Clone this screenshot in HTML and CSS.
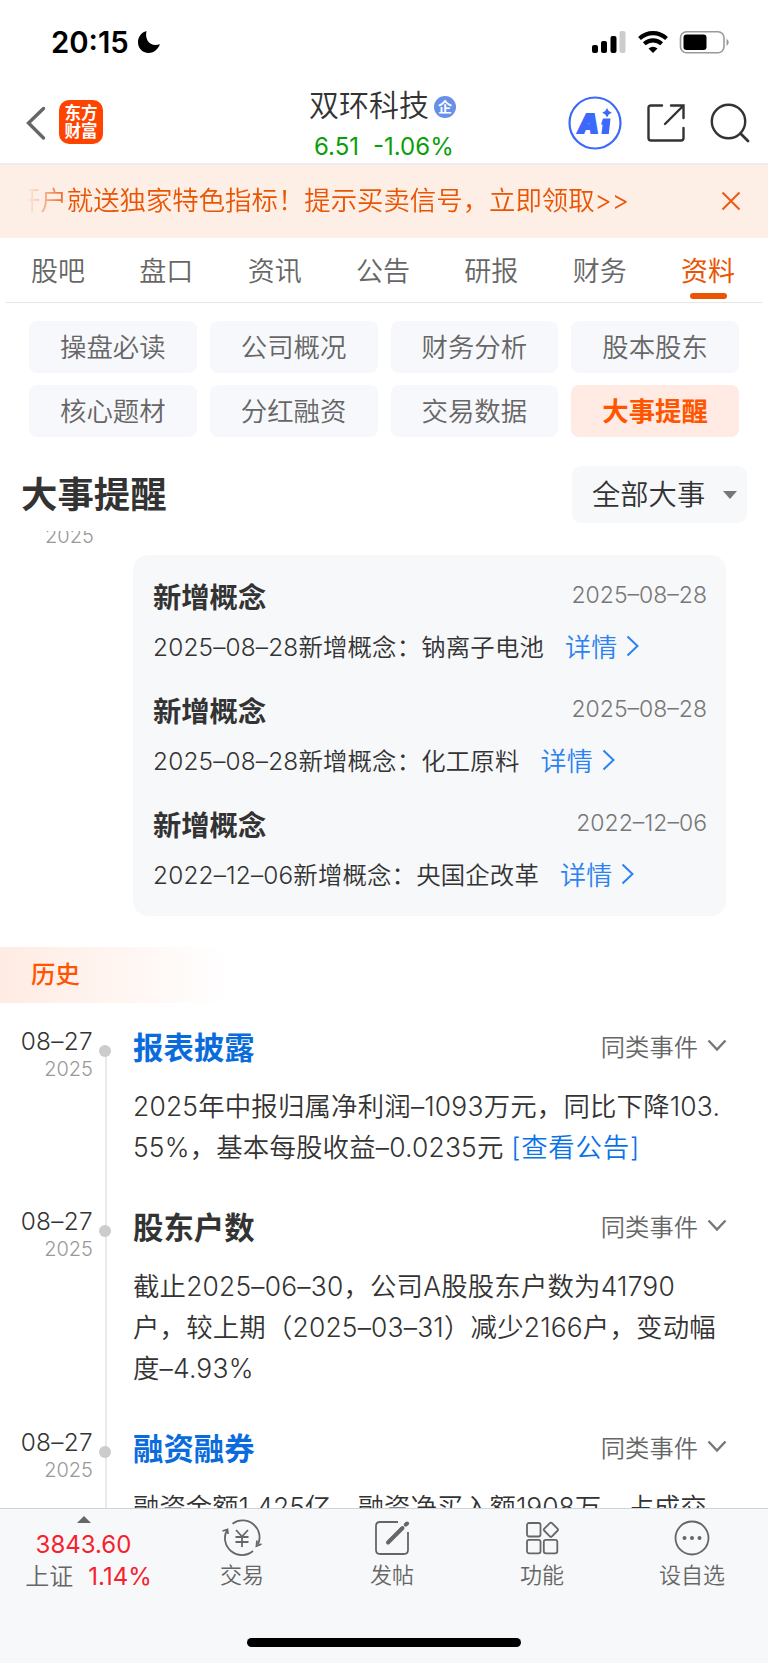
FILE: index.html
```html
<!DOCTYPE html>
<html lang="zh-CN">
<head>
    <meta charset="UTF-8">
    <title>双环科技 - 大事提醒</title>
    <link rel="stylesheet" href="styles.css">
</head>
<body>
    <!-- Status bar -->
    <div class="status-bar">
        <span class="time">20:15</span>
        <svg class="moon" width="24" height="24" viewBox="0 0 24 24"><path d="M9.5 1C7.6 9.5 12.500 17.300 23 14.300C20.500 20 16.500 23 11.500 23C5.500 23 1 18.300 1 12.300C1 7 4.300 2.300 9.500 1z"/></svg>
        <svg class="status-icons" width="140" height="24" viewBox="0 0 140 24">
            <rect x="1" y="14" width="6" height="8" rx="2"/>
            <rect x="10" y="10" width="6" height="12" rx="2"/>
            <rect x="19.500" y="5" width="6" height="17" rx="2"/>
            <rect x="28.500" y="0" width="6" height="22" rx="2" fill="#ccc"/>
            <g fill="none" stroke="#000" stroke-width="4.200">
                <path d="M48.500 7.500C56.500 0.300 67.500 0.300 75.500 7.500"/>
                <path d="M53.300 12.800C58.500 8.200 65.500 8.200 70.700 12.800"/>
            </g>
            <path d="M57.500 17.600Q62 14 66.500 17.600L62 22z"/>
            <rect x="89.500" y="0.800" width="43.500" height="21" rx="6" fill="none" stroke="#999" stroke-width="1.600"/>
            <rect x="92.500" y="3.500" width="23" height="15.500" rx="3"/>
            <path d="M135.500 7.500Q140 11.300 135.500 15z" fill="#999"/>
        </svg>
    </div>

    <!-- Header -->
    <div class="header">
        <svg class="back" width="22" height="36" viewBox="0 0 22 36"><path d="M18.500 3.500L3.500 18L18.500 33" fill="none" stroke="#666" stroke-width="3.400" stroke-linecap="round"/></svg>
        <div class="logo"><span>东方</span><span>财富</span></div>
        <div class="stock">
            <div class="stock-name">双环科技<span class="badge">企</span></div>
            <div class="stock-price"><span>6.51</span><span>-1.06%</span></div>
        </div>
        <div class="header-icons">
            <svg width="54" height="54" viewBox="0 0 54 54">
                <circle cx="27" cy="27" r="25.500" fill="none" stroke="#3c69fb" stroke-width="2.200"/>
                <text x="10" y="36.500" class="ai-text">A</text>
                <path d="M35 22.500h7.500l-1.700 15.500h-7.300l1.100-9.500h-1.600z" fill="#3c69fb"/>
                <path d="M39 12l1.700 3.100 3.100 1.700-3.100 1.700-1.700 3.100-1.700-3.100-3.100-1.700 3.100-1.700z" fill="#3c69fb"/>
            </svg>
            <svg class="share" width="40" height="40" viewBox="0 0 40 40"><path d="M16 2.500H5Q2.500 2.500 2.500 5V35Q2.500 37.500 5 37.500H35Q37.500 37.500 37.500 35V25M25 2.500H37.500V15M37 3L19 21" fill="none" stroke="#333" stroke-width="2.400" stroke-linecap="round"/></svg>
            <svg class="search" width="40" height="40" viewBox="0 0 40 40"><circle cx="18.500" cy="18.500" r="16.700" fill="none" stroke="#333" stroke-width="2.400"/><path d="M30.500 30.500L38 38" stroke="#333" stroke-width="2.800" stroke-linecap="round"/></svg>
        </div>
    </div>

    <!-- Banner -->
    <div class="banner">
        <div class="banner-text">开户就送独家特色指标！提示买卖信号，立即领取&gt;&gt;</div>
        <svg width="20" height="20" viewBox="0 0 20 20"><path d="M1.500 1.500L18.500 18.500M18.500 1.500L1.500 18.500" stroke="#ee5a10" stroke-width="2"/></svg>
    </div>

    <!-- Tabs -->
    <div class="tabs">
        <span class="tab">股吧</span>
        <span class="tab">盘口</span>
        <span class="tab">资讯</span>
        <span class="tab">公告</span>
        <span class="tab">研报</span>
        <span class="tab">财务</span>
        <span class="tab active">资料</span>
    </div>

    <div class="chips">
        <span class="chip">操盘必读</span>
        <span class="chip">公司概况</span>
        <span class="chip">财务分析</span>
        <span class="chip">股本股东</span>
        <span class="chip">核心题材</span>
        <span class="chip">分红融资</span>
        <span class="chip">交易数据</span>
        <span class="chip active">大事提醒</span>
    </div>

    <div class="section-head">
        <h1>大事提醒</h1>
        <div class="dropdown"><span>全部大事</span><svg width="14" height="8" viewBox="0 0 14 8"><path d="M0 0H14L7 8z" fill="#777"/></svg></div>
    </div>

    <!-- Scrolling content -->
    <div class="content">
        <div class="prev-year"><span>2025</span></div>

        <div class="card">
            <div class="concept">
                <div class="concept-head"><h2>新增概念</h2><span class="concept-date">2025–08–28</span></div>
                <div class="concept-desc">2025–08–28新增概念：钠离子电池<a class="detail">详情<svg width="13" height="22" viewBox="0 0 13 22"><path d="M1.500 1.500L11.500 11L1.500 20.500"/></svg></a></div>
            </div>
            <div class="concept">
                <div class="concept-head"><h2>新增概念</h2><span class="concept-date">2025–08–28</span></div>
                <div class="concept-desc">2025–08–28新增概念：化工原料<a class="detail">详情<svg width="13" height="22" viewBox="0 0 13 22"><path d="M1.500 1.500L11.500 11L1.500 20.500"/></svg></a></div>
            </div>
            <div class="concept">
                <div class="concept-head"><h2>新增概念</h2><span class="concept-date">2022–12–06</span></div>
                <div class="concept-desc">2022–12–06新增概念：央国企改革<a class="detail">详情<svg width="13" height="22" viewBox="0 0 13 22"><path d="M1.500 1.500L11.500 11L1.500 20.500"/></svg></a></div>
            </div>
        </div>

        <div class="history">历史</div>

        <div class="timeline">
            <div class="event">
                <div class="event-date"><span class="day">08–27</span><span class="year">2025</span></div>
                <div class="axis first"><i class="dot"></i></div>
                <div class="event-body">
                    <div class="event-head">
                        <h2 class="link">报表披露</h2>
                        <span class="similar">同类事件<svg width="20" height="13" viewBox="0 0 20 13"><path d="M1.500 1.500L10 10.500L18.500 1.500"/></svg></span>
                    </div>
                    <p>2025年中报归属净利润–1093万元，同比下降103.<br>55%，基本每股收益–0.0235元 <a>[查看公告]</a></p>
                </div>
            </div>
            <div class="event">
                <div class="event-date"><span class="day">08–27</span><span class="year">2025</span></div>
                <div class="axis"><i class="dot"></i></div>
                <div class="event-body">
                    <div class="event-head">
                        <h2>股东户数</h2>
                        <span class="similar">同类事件<svg width="20" height="13" viewBox="0 0 20 13"><path d="M1.500 1.500L10 10.500L18.500 1.500"/></svg></span>
                    </div>
                    <p>截止2025–06–30，公司A股股东户数为41790<br>户，较上期（2025–03–31）减少2166户，变动幅<br>度–4.93%</p>
                </div>
            </div>
            <div class="event">
                <div class="event-date"><span class="day">08–27</span><span class="year">2025</span></div>
                <div class="axis"><i class="dot"></i></div>
                <div class="event-body">
                    <div class="event-head">
                        <h2 class="link">融资融券</h2>
                        <span class="similar">同类事件<svg width="20" height="13" viewBox="0 0 20 13"><path d="M1.500 1.500L10 10.500L18.500 1.500"/></svg></span>
                    </div>
                    <p>融资金额1.425亿，融资净买入额1908万，占成交</p>
                </div>
            </div>
        </div>
    </div>

    <!-- Bottom bar -->
    <div class="footer">
        <div class="footer-row">
            <div class="index">
                <svg width="14" height="7" viewBox="0 0 14 7"><path d="M0 7L7 0L14 7z" fill="#666"/></svg>
                <div class="index-value">3843.60</div>
                <div class="index-name">上证<span>1.14%</span></div>
            </div>
            <div class="action">
                <svg width="42" height="38" viewBox="0 0 42 38">
                    <path d="M11.500 4.700A17 17 0 0 1 37 25.500M32 32A17 17 0 0 1 6 11"/>
                    <path d="M1.500 12L6.500 10.500L7 15M40.500 25L35.500 27L36 21.500"/>
                    <path d="M15 11L21 17.500L27 11M21 17.500V28M14.500 18H27.500M14.500 23H27.500"/>
                </svg>
                <span>交易</span>
            </div>
            <div class="action">
                <svg width="38" height="38" viewBox="0 0 38 38">
                    <path d="M25 3H7Q3 3 3 7V31Q3 35 7 35H31Q35 35 35 31V13"/>
                    <path d="M15 23.500L29.500 9" stroke-width="4" stroke-linecap="round"/>
                    <path d="M32.800 5.700L34 4.500" stroke-width="4" stroke-linecap="round"/>
                </svg>
                <span>发帖</span>
            </div>
            <div class="action">
                <svg width="38" height="38" viewBox="0 0 38 38">
                    <rect x="4" y="4" width="13.500" height="13.500" rx="2"/>
                    <rect x="4" y="20.800" width="13.500" height="13.500" rx="2"/>
                    <rect x="20.800" y="20.800" width="13.500" height="13.500" rx="2"/>
                    <rect x="22.500" y="5.300" width="10.800" height="10.800" rx="1.500" transform="rotate(45 27.900 10.700)"/>
                </svg>
                <span>功能</span>
            </div>
            <div class="action">
                <svg width="38" height="38" viewBox="0 0 38 38">
                    <circle cx="19" cy="19" r="16.500"/>
                    <path d="M11.500 19h.01M19 19h.01M26.500 19h.01" stroke-width="4" stroke-linecap="round"/>
                </svg>
                <span>设自选</span>
            </div>
        </div>
        <div class="home-indicator"></div>
    </div>
</body>
</html>
```
FILE: styles.css
```css
* {
    box-sizing: border-box;
}

body {
    margin: 0;
    width: 768px;
    height: 1663px;
    overflow: hidden;
    display: flex;
    flex-direction: column;
    background-color: #fff;
    color: #333;
    font-family: Inter, "Noto Sans CJK SC", sans-serif;
    font-weight: 350;
    white-space: nowrap;
}

h1, h2, p {
    margin: 0;
}

svg {
    display: block;
    flex: none;
    overflow: visible;
}

/* Status bar */
.status-bar {
    height: 84px;
    flex: none;
    display: flex;
    align-items: center;
    padding: 0 37px 0 51px;
    color: #000;
}

.time {
    width: 86px;
    font-size: 29.3px;
    font-weight: 600;
}

.status-icons {
    margin: 2px 0 0 auto;
}

/* Header */
.header {
    height: 81px;
    flex: none;
    display: flex;
    align-items: flex-start;
    padding: 0 18px 0 25px;
    border-bottom: 2px solid #ececec;
}

.back {
    margin-top: 21px;
}

.logo {
    width: 44px;
    height: 44px;
    margin: 16px 0 0 12px;
    padding-top: 4px;
    border-radius: 10px;
    background-color: #ff4400;
    color: #fff;
    font-size: 16.5px;
    font-weight: 700;
    line-height: 18px;
    text-align: center;
}

.logo span {
    display: block;
}

.stock {
    width: 160px;
    margin-left: 206px;
}

.stock-name {
    display: flex;
    align-items: center;
    height: 46px;
    font-size: 30px;
    line-height: 42px;
    padding-bottom: 4px;
}

.badge {
    width: 22px;
    height: 22px;
    margin: 3px 0 0 5px;
    border-radius: 50%;
    background-color: #6890e8;
    color: #fff;
    font-size: 14px;
    font-weight: 700;
    line-height: 21px;
    text-align: center;
}

.stock-price {
    display: flex;
    gap: 14px;
    margin-left: 5px;
    color: #0a9f0a;
    font-size: 24px;
    font-weight: 400;
    line-height: 33px;
}

.header-icons {
    display: flex;
    align-items: flex-start;
    margin: 11.5px 0 0 auto;
}

.ai-text {
    fill: #3c69fb;
    stroke: #3c69fb;
    stroke-width: 2px;
    font-size: 26px;
    font-weight: 900;
    font-style: italic;
}

.share {
    margin: 7px 0 0 24px;
}

.search {
    margin: 7px 0 0 24px;
}

/* Banner */
.banner {
    height: 73px;
    flex: none;
    display: flex;
    align-items: center;
    justify-content: space-between;
    padding: 0 27px 2px 14px;
    background-color: #fdeee6;
    color: #ea5504;
    font-size: 26.4px;
    line-height: 68px;
}

.banner-text {
    padding-bottom: 2px;
    -webkit-mask-image: linear-gradient(to right, transparent 13px, #000 56px);
    mask-image: linear-gradient(to right, transparent 13px, #000 56px);
}

/* Tabs */
.tabs {
    height: 65px;
    flex: none;
    display: flex;
    justify-content: space-between;
    margin: 0 6px;
    padding: 0 27px 0 25px;
    border-bottom: 1px solid #e5e5e8;
    color: #666;
    font-size: 27px;
    line-height: 68px;
}

.tab.active {
    position: relative;
    color: #ea5504;
    font-weight: 400;
}

.tab.active::after {
    content: "";
    position: absolute;
    left: 9px;
    bottom: 3px;
    width: 37px;
    height: 6px;
    border-radius: 3px;
    background-color: #ea5504;
}

.chips {
    flex: none;
    display: grid;
    grid-template-columns: repeat(4, 1fr);
    gap: 12px 13px;
    padding: 18px 29px 0;
}

.chip {
    height: 52px;
    border-radius: 8px;
    background-color: #f7f8fb;
    color: #666;
    font-size: 26.4px;
    line-height: 52px;
    text-align: center;
}

.chip.active {
    background-color: #ffebe3;
    color: #ff5500;
    font-weight: 700;
}

.section-head {
    height: 94px;
    flex: none;
    display: flex;
    justify-content: space-between;
    align-items: flex-start;
    padding: 29px 21px 0;
}

h1 {
    font-size: 36.4px;
    font-weight: 700;
    line-height: 59px;
}

.dropdown {
    display: flex;
    align-items: center;
    justify-content: space-between;
    width: 175px;
    height: 57px;
    padding: 0 10px 0 20px;
    border-radius: 9px;
    background-color: #f7f8fa;
    font-size: 28.3px;
}

.dropdown span {
    padding-bottom: 5px;
}

/* Scrolling content */
.content {
    flex: 1;
    min-height: 0;
    overflow: hidden;
}

.prev-year {
    display: flex;
    align-items: flex-end;
    height: 13px;
    margin-bottom: 11px;
    padding-left: 45px;
    overflow: hidden;
    color: #999;
    font-size: 20px;
    line-height: 15px;
}

.card {
    width: 593px;
    height: 361px;
    margin-left: 133px;
    padding: 20px 19px 0 20px;
    border-radius: 15px;
    background-color: #f7f8fa;
}

.concept {
    height: 114px;
}

.concept-head {
    display: flex;
    justify-content: space-between;
    height: 44px;
    line-height: 46px;
}

h2 {
    font-size: 28.3px;
    font-weight: 700;
}

.concept-date {
    color: #777;
    font-size: 23px;
    line-height: 41px;
}

.concept-desc {
    display: flex;
    align-items: center;
    height: 53px;
    font-size: 24.4px;
    letter-spacing: 0.17px;
}

.detail {
    display: flex;
    align-items: center;
    gap: 9px;
    margin-left: 21px;
    color: #2b82f0;
    font-size: 26px;
}

.detail svg {
    fill: none;
    stroke: #2b82f0;
    stroke-width: 2;
}

.history {
    width: 230px;
    height: 56px;
    margin: 31px 0 27px;
    padding-left: 31px;
    background: linear-gradient(to right, #ffebe3, #fff);
    color: #ff5500;
    font-size: 24.4px;
    font-weight: 500;
    line-height: 55px;
}

/* Timeline */
.event {
    display: flex;
}

.event-date {
    width: 93px;
    display: flex;
    flex-direction: column;
    align-items: flex-end;
}

.day {
    font-size: 24.4px;
    line-height: 22px;
    letter-spacing: 0.3px;
}

.year {
    color: #999;
    font-size: 20px;
    line-height: 34px;
}

.axis {
    width: 40px;
    padding: 15px 0 0 6px;
    background: linear-gradient(#eaeaea, #eaeaea) 12px 0 / 2px 100% no-repeat;
}

.axis.first {
    background-position: 12px 20px;
}

.dot {
    display: block;
    width: 12px;
    height: 12px;
    border-radius: 50%;
    background-color: #ccc;
}

.event-body {
    width: 594px;
    padding-bottom: 42px;
}

.event-head {
    display: flex;
    justify-content: space-between;
    align-items: center;
    height: 31px;
    margin-bottom: 25px;
}

.event-head h2 {
    font-size: 30.4px;
}

.event-head .link {
    color: #0a6cdc;
}

.similar {
    display: flex;
    align-items: center;
    gap: 9px;
    color: #666;
    font-size: 24.3px;
}

.similar svg {
    fill: none;
    stroke: #777;
    stroke-width: 2.4;
}

.event-body p {
    font-size: 26.4px;
    line-height: 41px;
    letter-spacing: 0.2px;
}

.event:last-child p {
    letter-spacing: 0;
}

.event-body a {
    color: #0a72e8;
    letter-spacing: 0.8px;
}

/* Bottom bar */
.footer {
    height: 155px;
    flex: none;
    border-top: 1px solid #ccd4dc;
    background-color: #f7f8fa;
}

.footer-row {
    display: flex;
    height: 129px;
}

.index {
    display: flex;
    flex-direction: column;
    align-items: center;
    width: 167px;
    padding-top: 7px;
    color: #f5222d;
    font-size: 24px;
    font-weight: 400;
}

.index-value {
    margin-top: 6px;
    line-height: 32px;
}

.index-name {
    display: flex;
    gap: 15px;
    padding-left: 10px;
    color: #666;
    font-weight: 350;
    line-height: 32px;
}

.index-name span {
    color: #f5222d;
    font-weight: 400;
}

.action {
    display: flex;
    flex-direction: column;
    align-items: center;
    width: 150px;
    padding-top: 10px;
    color: #666;
    font-size: 22px;
    line-height: 36px;
}

.action svg {
    fill: none;
    stroke: #666;
    stroke-width: 1.8;
}

.home-indicator {
    width: 274px;
    height: 9px;
    margin: 0 auto;
    border-radius: 5px;
    background-color: #000;
}
```
